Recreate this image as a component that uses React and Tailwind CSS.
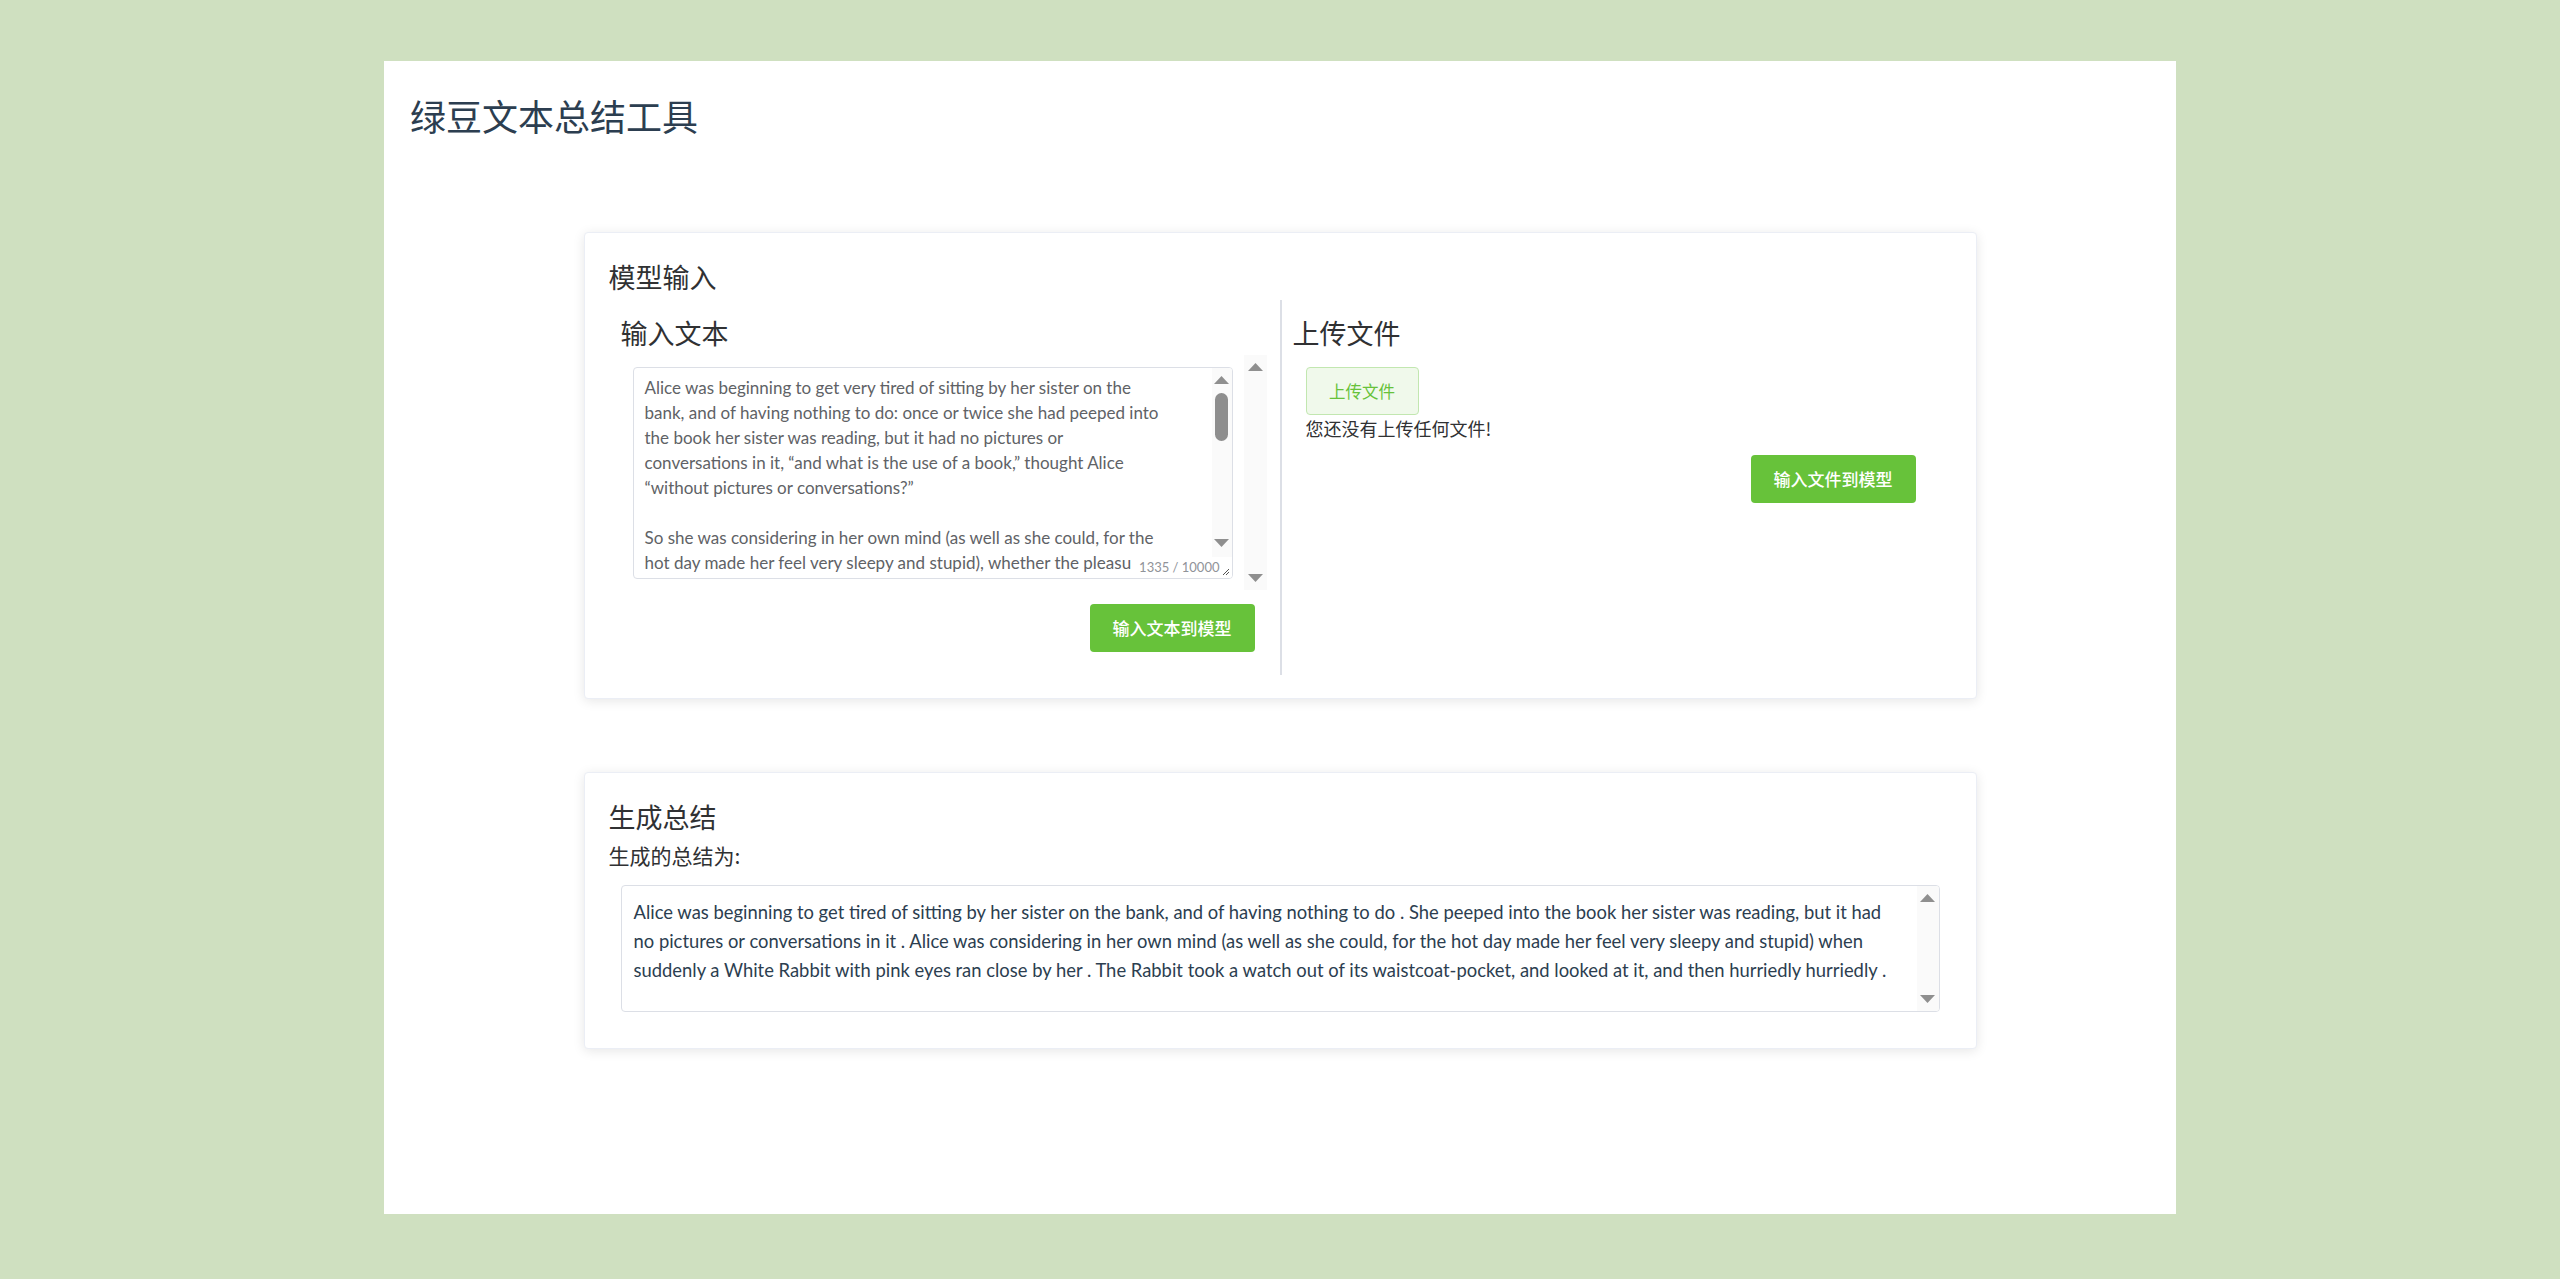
import React from 'react';

const cjk = "font-['Noto_Sans_CJK_SC','Noto_Sans',sans-serif]";
const latin = "font-['Lato','Noto_Sans_CJK_SC',sans-serif]";

const inputLines = [
    'Alice was beginning to get very tired of sitting by her sister on the',
    'bank, and of having nothing to do: once or twice she had peeped into',
    'the book her sister was reading, but it had no pictures or',
    'conversations in it, \u201cand what is the use of a book,\u201d thought Alice',
    '\u201cwithout pictures or conversations?\u201d',
    '',
    'So she was considering in her own mind (as well as she could, for the',
    'hot day made her feel very sleepy and stupid), whether the pleasu',
];

const summaryLines = [
    'Alice was beginning to get tired of sitting by her sister on the bank, and of having nothing to do . She peeped into the book her sister was reading, but it had',
    'no pictures or conversations in it . Alice was considering in her own mind (as well as she could, for the hot day made her feel very sleepy and stupid) when',
    'suddenly a White Rabbit with pink eyes ran close by her . The Rabbit took a watch out of its waistcoat-pocket, and looked at it, and then hurriedly hurriedly .',
];

function Arrow({ down }) {
    return (
        <svg width="15" height="8" viewBox="0 0 15 8" className="block shrink-0">
            <path d={down ? 'M0 0H15L7.5 8Z' : 'M7.5 0L15 8H0Z'} fill="#8f8f8f" />
        </svg>
    );
}

// fake windows-style scrollbar track
function Scrollbar({ className, thumb }) {
    return (
        <div className={`flex shrink-0 flex-col items-center bg-[#fafafa] pt-[8px] pb-[8px] ${className}`}>
            <Arrow />
            {thumb && <div className="mt-[9px] h-[48px] w-[13px] rounded-full bg-[#8e8e8e]" />}
            <div className="flex-1" />
            <Arrow down />
        </div>
    );
}

function TextInput() {
    return (
        <div className="relative flex h-[212px] w-[600px] overflow-hidden rounded-[4px] border border-[#dcdfe6] bg-white">
            <div className={`flex-1 overflow-hidden whitespace-pre pl-[11px] pt-[7px] text-[17px] leading-[25px] text-[#606266] ${latin}`}>
                {inputLines.map((line, i) => (
                    <div key={i} className="h-[25px]">{line}</div>
                ))}
            </div>
            <div className="flex w-[20px] shrink-0 flex-col">
                <Scrollbar className="h-[189px] w-[20px] !pb-[10px]" thumb />
                <div className="flex flex-1 items-end justify-end bg-white pr-[2px] pb-[2px]">
                    <svg width="9" height="9" viewBox="0 0 9 9">
                        <path d="M8 2L2 8M8 5L5 8" stroke="#555" strokeWidth="1" />
                    </svg>
                </div>
            </div>
            <span className={`absolute right-[12px] bottom-[3px] bg-white pl-[1px] text-[13px] leading-[16px] text-[#909399] ${latin}`}>
                1335 / 10000
            </span>
        </div>
    );
}

function Card({ className, children }) {
    return (
        <div className={`mx-auto w-[1393px] rounded-[4px] border border-[#ebeef5] bg-white px-[24px] shadow-[0_2px_12px_0_rgba(0,0,0,0.1)] ${className}`}>
            {children}
        </div>
    );
}

export default function App() {
    return (
        <div className={`min-h-screen bg-[#cfe0c0] pt-[61px] ${cjk}`}>
            <div className="mx-auto h-[1153px] w-[1792px] bg-white px-[26px] pt-[36px]">
                <h1 className="text-[36px] leading-[36px] font-normal text-[#2c3e50]">绿豆文本总结工具</h1>

                <Card className="mt-[99px] pt-[31px] pb-[23px]">
                    <h2 className="text-[27px] leading-[26px] text-[#303133]">模型输入</h2>
                    <div className="mt-[10px] flex h-[375px]">
                        <div className="flex w-[671px] flex-col pt-[20px]">
                            <h3 className="ml-[12px] text-[27px] leading-[26px] text-[#303133]">输入文本</h3>
                            <div className="mt-[9px] ml-[12px] flex h-[235px] w-[646px]">
                                <div className="w-[623px] pt-[12px] pl-[12px]">
                                    <TextInput />
                                </div>
                                <Scrollbar className="h-[235px] w-[23px]" />
                            </div>
                            <button className="mt-[14px] mr-[25px] h-[48px] w-[165px] self-end rounded-[4px] bg-[#67c23a] text-[17px] font-medium text-white">
                                输入文本到模型
                            </button>
                        </div>
                        <div className="w-[2px] bg-[#dcdfe6]" />
                        <div className="flex flex-1 flex-col pt-[20px]">
                            <h3 className="ml-[11px] text-[27px] leading-[26px] text-[#303133]">上传文件</h3>
                            <button className="mt-[21px] ml-[24px] h-[48px] w-[113px] rounded-[4px] border border-[#c2e7b0] bg-[#f0f9eb] text-[16.5px] text-[#67c23a]">
                                上传文件
                            </button>
                            <p className="mt-[5px] ml-[24px] text-[18px] leading-[17px] text-[#303133]">您还没有上传任何文件!</p>
                            <button className="mt-[18px] mr-[36px] h-[48px] w-[165px] self-end rounded-[4px] bg-[#67c23a] text-[17px] font-medium text-white">
                                输入文件到模型
                            </button>
                        </div>
                    </div>
                </Card>

                <Card className="mt-[73px] pt-[31px] pb-[36px]">
                    <h2 className="text-[27px] leading-[26px] text-[#303133]">生成总结</h2>
                    <p className="mt-[15px] text-[21px] leading-[21px] text-[#303133]">生成的总结为:</p>
                    <div className="mx-[12px] mt-[19px] flex h-[127px] overflow-hidden rounded-[4px] border border-[#dcdfe6]">
                        <div className={`flex-1 overflow-hidden whitespace-pre pl-[12px] pt-[12px] text-[18.4px] leading-[29px] text-[#2c3e50] ${latin}`}>
                            {summaryLines.map((line, i) => (
                                <div key={i}>{line}</div>
                            ))}
                        </div>
                        <Scrollbar className="h-full w-[22px]" />
                    </div>
                </Card>
            </div>
        </div>
    );
}
